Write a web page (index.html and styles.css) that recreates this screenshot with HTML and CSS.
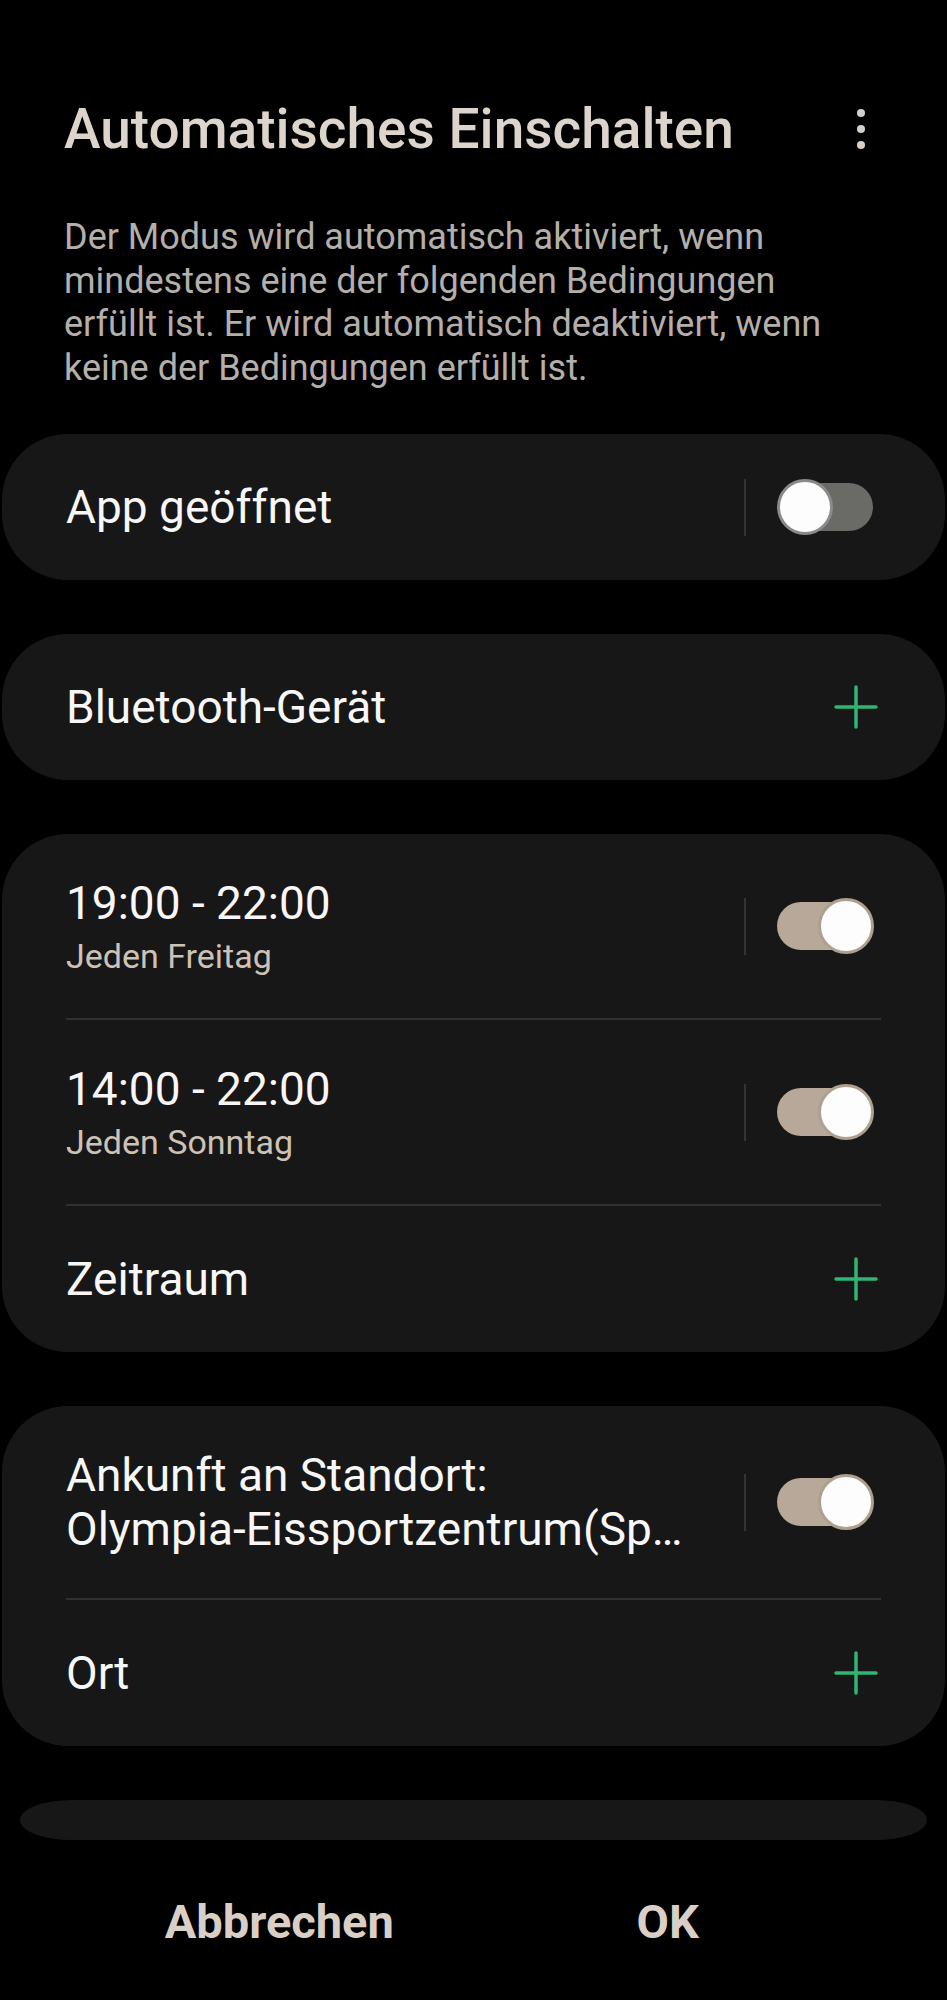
FILE: index.html
```html
<!DOCTYPE html>
<html lang="de">
<head>
  <meta charset="UTF-8" />
  <meta name="viewport" content="width=device-width, initial-scale=1.0" />
  <title>Automatisches Einschalten</title>
  <link rel="stylesheet" href="styles.css">
</head>

<body>
  <header class="top">
    <h1>Automatisches Einschalten</h1>
    <div class="kebab"><span></span><span></span><span></span></div>
  </header>

  <p class="desc">Der Modus wird automatisch aktiviert, wenn mindestens eine der folgenden Bedingungen erfüllt ist. Er wird automatisch deaktiviert, wenn keine der Bedingungen erfüllt ist.</p>

  <section class="card">
    <div class="row">
      <div class="text"><div class="title">App geöffnet</div></div>
      <div class="ctl">
        <span class="sep"></span>
        <span class="switch"><span class="thumb"></span></span>
      </div>
    </div>
  </section>

  <section class="card">
    <div class="row">
      <div class="text"><div class="title">Bluetooth-Gerät</div></div>
      <svg class="plus" viewBox="0 0 44 44"><path d="M22 2v40M2 22h40" /></svg>
    </div>
  </section>

  <section class="card">
    <div class="row tall">
      <div class="text">
        <div class="title">19:00 - 22:00</div>
        <div class="sub">Jeden Freitag</div>
      </div>
      <div class="ctl">
        <span class="sep"></span>
        <span class="switch on"><span class="thumb"></span></span>
      </div>
    </div>
    <div class="row tall">
      <div class="text">
        <div class="title">14:00 - 22:00</div>
        <div class="sub">Jeden Sonntag</div>
      </div>
      <div class="ctl">
        <span class="sep"></span>
        <span class="switch on"><span class="thumb"></span></span>
      </div>
    </div>
    <div class="row">
      <div class="text"><div class="title">Zeitraum</div></div>
      <svg class="plus" viewBox="0 0 44 44"><path d="M22 2v40M2 22h40" /></svg>
    </div>
  </section>

  <section class="card">
    <div class="row tall">
      <div class="text">
        <div class="title">Ankunft an Standort:</div>
        <div class="title cut">Olympia-Eissportzentrum(Spiridon-Louis-Ring)</div>
      </div>
      <div class="ctl wide">
        <span class="sep"></span>
        <span class="switch on"><span class="thumb"></span></span>
      </div>
    </div>
    <div class="row">
      <div class="text"><div class="title">Ort</div></div>
      <svg class="plus" viewBox="0 0 44 44"><path d="M22 2v40M2 22h40" /></svg>
    </div>
  </section>

  <div class="card peek"></div>

  <footer class="actions">
    <button>Abbrechen</button>
    <button>OK</button>
  </footer>
</body>
</html>
```

FILE: styles.css
```css
:root {
  --bg: #000;
  --card: #171717;
  --beige: #ddd4cb;
  --muted: #b4afaa;
  --text: #f7f7f7;
  --sub: #cdc2b6;
  --line: #313131;
  --green: #2fb574;
}

* {
  box-sizing: border-box;
}

body {
  margin: 0;
  background: var(--bg);
  color: var(--text);
  font-family: Roboto, "Noto Sans", sans-serif;
}

.top {
  display: flex;
  align-items: center;
  justify-content: space-between;
  padding: 97px 82px 0 64px;
}

h1 {
  margin: 0;
  font-size: 55px;
  line-height: 64px;
  font-weight: 500;
  color: var(--beige);
}

.kebab {
  display: flex;
  flex-direction: column;
  gap: 8px;
}

.kebab span {
  width: 8px;
  height: 8px;
  border-radius: 50%;
  background: #d8d0c8;
}

.desc {
  margin: 55px 90px 44px 64px;
  font-size: 36px;
  line-height: 43.5px;
  color: var(--muted);
}

.card {
  margin: 0 2px 54px;
  background: var(--card);
  border-radius: 66px;
}

.row {
  display: flex;
  align-items: center;
  min-height: 146px;
  margin: 0 64px;
  padding: 42px 0;
}

.row + .row {
  min-height: 148px;
  border-top: 2px solid var(--line);
}

.text {
  flex: 1;
  min-width: 0;
}

.title {
  font-size: 46px;
  line-height: 54px;
}

.cut {
  white-space: nowrap;
  overflow: hidden;
  text-overflow: ellipsis;
}

.sub {
  margin-top: 6px;
  font-size: 34px;
  line-height: 40px;
  color: var(--sub);
}

.ctl {
  display: flex;
  align-items: center;
  gap: 31px;
  margin: 0 7px 0 32px;
}

.ctl.wide {
  margin-left: 56px;
}

.sep {
  width: 2px;
  height: 57px;
  background: #343434;
}

.switch {
  position: relative;
  display: flex;
  align-items: center;
  width: 97px;
  height: 56px;
}

.switch::before {
  content: "";
  width: 94px;
  height: 48px;
  margin-left: 2px;
  border-radius: 24px;
  background: #6a6a66;
}

.thumb {
  position: absolute;
  top: 0;
  left: 0;
  width: 56px;
  height: 56px;
  border-radius: 50%;
  background: #fdfdfd;
  border: 3px solid #8a8a8a;
}

.switch.on::before {
  margin-left: 0;
  background: #b7a899;
}

.switch.on .thumb {
  left: auto;
  right: 0;
  border-color: #ada090;
}

.plus {
  width: 44px;
  height: 44px;
  margin-right: 3px;
  fill: none;
  stroke: var(--green);
  stroke-width: 3.5;
  stroke-linecap: round;
}

.peek {
  height: 40px;
  margin: 0 20px;
  border-radius: 52px / 20px;
}

.actions {
  display: grid;
  grid-template-columns: 1fr 1fr;
  padding: 0 85px;
  margin-top: 54px;
}

.actions button {
  background: none;
  border: none;
  padding: 0;
  font-family: inherit;
  font-size: 47px;
  line-height: 56px;
  font-weight: 700;
  color: #d9cfc6;
}
```
